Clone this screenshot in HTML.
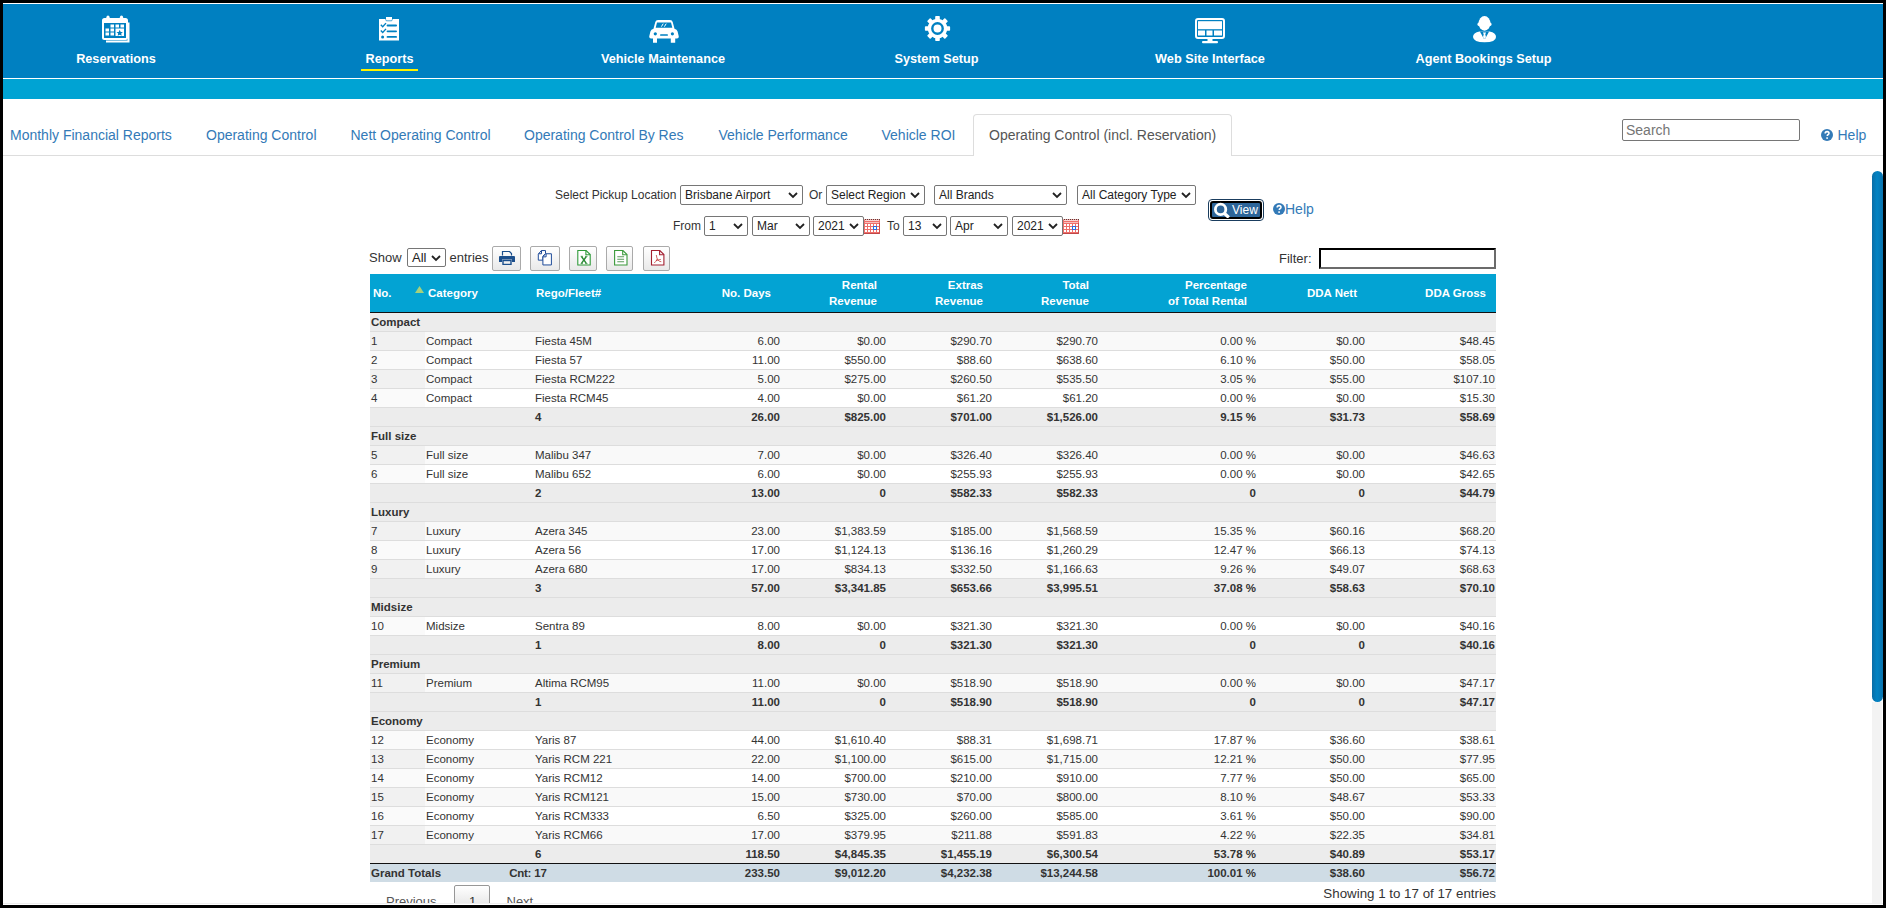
<!DOCTYPE html>
<html><head><meta charset="utf-8"><title>Operating Control (incl. Reservation)</title>
<style>
*{box-sizing:border-box}
html,body{margin:0;padding:0}
body{width:1886px;height:908px;position:relative;overflow:hidden;background:#fff;font-family:"Liberation Sans",sans-serif;color:#333}
.a{position:absolute}
.frame{position:absolute;background:#000;z-index:50}
/* nav */
.nav{position:absolute;left:3px;top:4px;width:1880px;height:74px;background:#0080c1}
.navline{position:absolute;left:3px;top:78px;width:1880px;height:1px;background:#fff}
.band{position:absolute;left:3px;top:79px;width:1880px;height:20px;background:#00a3d3}
.ni{position:absolute;top:52px;width:274px;text-align:center;color:#fff;font-weight:bold;font-size:12.7px;line-height:15px;white-space:nowrap}
.ico{position:absolute}
/* tabs */
.tabline{position:absolute;left:3px;top:155px;width:1880px;height:1px;background:#ddd}
.tab{position:absolute;top:125px;font-size:14px;line-height:20px;color:#337ab7;white-space:nowrap}
.tabact{position:absolute;left:973px;top:114px;width:259px;height:42px;border:1px solid #ddd;border-bottom:0;border-radius:4px 4px 0 0;background:#fff}
/* generic text */
.t{position:absolute;white-space:nowrap}
.sel{position:absolute;height:20px;border:1px solid #767676;border-radius:2px;background:#fff;font-size:12px;line-height:18px;padding-left:4px;color:#222;white-space:nowrap}
.sel svg{position:absolute;right:4px;top:6px}
.btn{position:absolute;top:246px;height:25px;border:1px solid #aaa;border-radius:2px;background:linear-gradient(#fff,#e9e9e9)}
.btn svg{position:absolute}
/* table */
.thead{position:absolute;left:370px;top:274px;width:1126px;height:39px;background:#03a3d3;border-bottom:1px solid #111}
.th{position:absolute;color:#fff;font-weight:bold;font-size:11.5px;line-height:16px;white-space:nowrap}
.row{position:absolute;left:370px;width:1126px;height:19px;border-bottom:1px solid #ddd}
.row i{position:absolute;left:0;top:0;width:55px;height:18px}
.odd{background:#f9f9f9}.odd i{background:#f1f1f1}
.even{background:#fff}.even i{background:#fafafa}
.grp{background:#ececec}
.tot{height:18px;border:0;background:#cfdce5}
.l,.r{position:absolute;font-size:11.5px;line-height:18px;white-space:nowrap;color:#333}
.b{font-weight:bold;color:#333}
</style></head>
<body>
<!-- NAV -->
<div class="nav"></div>
<div class="navline"></div>
<div class="band"></div>

<div class="ni" style="left:-21px">Reservations</div>
<div class="ni" style="left:252.5px">Reports</div>
<div class="ni" style="left:526px">Vehicle Maintenance</div>
<div class="ni" style="left:799.5px">System Setup</div>
<div class="ni" style="left:1073px">Web Site Interface</div>
<div class="ni" style="left:1346.5px">Agent Bookings Setup</div>
<div class="a" style="left:361px;top:69px;width:57px;height:2px;background:#fff200"></div>

<!-- icons -->
<svg class="ico" style="left:101px;top:15px" width="31" height="29" viewBox="0 0 31 29">
 <g fill="none" stroke="#fff" stroke-width="2">
  <rect x="2" y="4" width="24" height="20" rx="1.5"/>
  <path d="M5 26.5h22.5v-19"/>
 </g>
 <rect x="2" y="4" width="24" height="4" fill="#fff"/>
 <circle cx="7" cy="2.2" r="1.6" fill="#fff"/><circle cx="20.5" cy="2.2" r="1.6" fill="#fff"/>
 <g fill="#fff">
  <rect x="9.5" y="9.5" width="3.5" height="3"/><rect x="14.5" y="9.5" width="3.5" height="3"/><rect x="19.5" y="9.5" width="3.5" height="3"/>
  <rect x="4.5" y="13.5" width="3.5" height="3"/><rect x="9.5" y="13.5" width="3.5" height="3"/>
  <rect x="4.5" y="17.5" width="3.5" height="3"/><rect x="9.5" y="17.5" width="3.5" height="3"/>
  <rect x="14.5" y="13.5" width="8.5" height="7.5"/>
 </g>
 <path d="M18.7 14.8l1 2.1 2.2.2-1.7 1.5.5 2.2-2-1.1-2 1.1.5-2.2-1.7-1.5 2.2-.2z" fill="#0080c1"/>
</svg>

<svg class="ico" style="left:378px;top:16px" width="22" height="26" viewBox="0 0 22 26">
 <path d="M1 3h7v-2h6v2h7v21.5h-20z" fill="#fff"/>
 <path d="M7.5 3.2l.8 1.6h5.4l.8-1.6" fill="none" stroke="#0080c1" stroke-width="0.7"/>
 <g fill="none" stroke="#0080c1" stroke-width="1.4">
  <path d="M2.8 8.8l1.9 1.9 3.3-3.6"/><path d="M2.8 14.6l1.9 1.9 3.3-3.6"/>
 </g>
 <g fill="#0080c1"><rect x="8.6" y="8.6" width="10.4" height="1.8" rx=".9"/><rect x="8.6" y="14.4" width="10.4" height="1.8" rx=".9"/><rect x="8.6" y="20" width="10.4" height="1.8" rx=".9"/><circle cx="4.6" cy="20.9" r="1.5"/></g>
</svg>

<svg class="ico" style="left:649px;top:20px" width="30" height="23" viewBox="0 0 30 23">
 <path d="M6.3 2Q6.8 0 9 0H21Q23.2 0 23.7 2L25.5 8.8Q28 9.5 28.6 11.5L29.8 16.5Q29.8 18.5 28 18.5H26.2V22.8H21.8V18.5H8V22.8H4V18.5H2Q0.2 18.5 0.2 16.5L1.4 11.5Q2 9.5 4.5 8.8Z" fill="#fff"/>
 <path d="M8 2.6H22L23.3 7.8H6.7Z" fill="#0080c1"/>
 <g stroke="#fff" stroke-width="1" stroke-linecap="round"><path d="M12.6 6.3l1.4-2.3M15.6 6.3l1.4-2.3"/></g>
 <circle cx="6.3" cy="13.8" r="1.6" fill="#0080c1"/><circle cx="23.4" cy="13.8" r="1.6" fill="#0080c1"/>
 <rect x="11.1" y="14.2" width="7.8" height="1.5" rx=".5" fill="#0080c1"/>
</svg>

<svg class="ico" style="left:924px;top:15.4px" width="27" height="27" viewBox="0 0 27 27">
 <g fill="#fff" transform="translate(13.5 13.5)">
  <circle r="9.8"/>
  <rect x="-2.3" y="-12.6" width="4.6" height="5" rx=".8"/>
  <rect x="-2.3" y="-12.6" width="4.6" height="5" rx=".8" transform="rotate(45)"/>
  <rect x="-2.3" y="-12.6" width="4.6" height="5" rx=".8" transform="rotate(90)"/>
  <rect x="-2.3" y="-12.6" width="4.6" height="5" rx=".8" transform="rotate(135)"/>
  <rect x="-2.3" y="-12.6" width="4.6" height="5" rx=".8" transform="rotate(180)"/>
  <rect x="-2.3" y="-12.6" width="4.6" height="5" rx=".8" transform="rotate(225)"/>
  <rect x="-2.3" y="-12.6" width="4.6" height="5" rx=".8" transform="rotate(270)"/>
  <rect x="-2.3" y="-12.6" width="4.6" height="5" rx=".8" transform="rotate(315)"/>
 </g>
 <circle cx="13.5" cy="13.5" r="5.2" fill="none" stroke="#0080c1" stroke-width="2.4"/>
</svg>

<svg class="ico" style="left:1195px;top:18px" width="30" height="26" viewBox="0 0 30 26">
 <rect x="1" y="1" width="28" height="19" rx="2" fill="none" stroke="#fff" stroke-width="2"/>
 <g fill="#fff"><rect x="3" y="3.2" width="24" height="8"/><rect x="3" y="12.5" width="7" height="5"/><rect x="11.5" y="12.5" width="6" height="5"/><rect x="19" y="12.5" width="8" height="5"/>
 <rect x="12.5" y="20" width="5" height="3.5"/><rect x="7" y="23" width="16" height="2.2" rx="1"/></g>
</svg>

<svg class="ico" style="left:1473px;top:16px" width="24" height="27" viewBox="0 0 24 27">
 <g fill="#fff">
  <ellipse cx="11.5" cy="7.4" rx="5.9" ry="7.3"/>
  <ellipse cx="5.6" cy="8.2" rx="1.1" ry="1.8"/><ellipse cx="17.4" cy="8.2" rx="1.1" ry="1.8"/>
  <path d="M6.5 15.6Q0 17 0 21Q0.5 26.3 11.5 26.3Q23 26.3 23 21Q23 17 16.5 15.6z"/>
 </g>
 <path d="M6.9 15.5L16.1 15.5L12.3 22.6L10.7 22.6Z" fill="#0080c1"/>
 <path d="M9.9 16.4H13.1L12.3 18.3L13 21.3L11.5 22.8L10 21.3L10.7 18.3Z" fill="#fff"/>
</svg>

<!-- TABS -->
<div class="tabline"></div>
<div class="tabact"></div>
<div class="tab" style="left:10px">Monthly Financial Reports</div>
<div class="tab" style="left:206px">Operating Control</div>
<div class="tab" style="left:350.5px">Nett Operating Control</div>
<div class="tab" style="left:524px">Operating Control By Res</div>
<div class="tab" style="left:718.5px">Vehicle Performance</div>
<div class="tab" style="left:881.5px">Vehicle ROI</div>
<div class="tab" style="left:989px;color:#555">Operating Control (incl. Reservation)</div>

<div class="a" style="left:1622px;top:119px;width:178px;height:22px;border:1px solid #767676;border-radius:2px;background:#fff"></div>
<div class="t" style="left:1626px;top:122px;font-size:14px;line-height:16px;color:#757575">Search</div>
<svg class="ico" style="left:1821px;top:129px" width="12" height="12" viewBox="0 0 12 12"><circle cx="6" cy="6" r="6" fill="#337ab7"/><path d="M4.2 4.6q0-2 1.9-2q1.9 0 1.9 1.7q0 1-1.1 1.5q-.6.3-.6 1.1" fill="none" stroke="#fff" stroke-width="1.6"/><rect x="5.3" y="8.3" width="1.6" height="1.6" fill="#fff"/></svg>
<div class="t" style="left:1837.5px;top:127px;font-size:14px;line-height:16px;color:#337ab7">Help</div>

<!-- scrollbar -->
<div class="a" style="left:1872px;top:702px;width:10px;height:201px;background:#f3f3f3"></div>
<div class="a" style="left:1872px;top:171px;width:11px;height:531px;background:linear-gradient(90deg,#0a6da6,#0283c3 45%,#0a72ad);border-radius:5.5px"></div>

<!-- FILTERS -->
<div class="t" style="left:555px;top:188px;font-size:12px;line-height:14px;color:#333">Select Pickup Location</div>
<div class="sel" style="left:680px;top:185px;width:123px">Brisbane Airport<svg width="10" height="7" viewBox="0 0 10 7"><path d="M1 1l4 4 4-4" fill="none" stroke="#222" stroke-width="1.8"/></svg></div>
<div class="t" style="left:809px;top:188px;font-size:12px;line-height:14px;color:#333">Or</div>
<div class="sel" style="left:826px;top:185px;width:99px">Select Region<svg width="10" height="7" viewBox="0 0 10 7"><path d="M1 1l4 4 4-4" fill="none" stroke="#222" stroke-width="1.8"/></svg></div>
<div class="sel" style="left:934px;top:185px;width:133px">All Brands<svg width="10" height="7" viewBox="0 0 10 7"><path d="M1 1l4 4 4-4" fill="none" stroke="#222" stroke-width="1.8"/></svg></div>
<div class="sel" style="left:1077px;top:185px;width:119px">All Category Type<svg width="10" height="7" viewBox="0 0 10 7"><path d="M1 1l4 4 4-4" fill="none" stroke="#222" stroke-width="1.8"/></svg></div>

<div class="t" style="left:673px;top:219px;font-size:12px;line-height:14px;color:#333">From</div>
<div class="sel" style="left:704px;top:216px;width:44px">1<svg width="10" height="7" viewBox="0 0 10 7"><path d="M1 1l4 4 4-4" fill="none" stroke="#222" stroke-width="1.8"/></svg></div>
<div class="sel" style="left:752px;top:216px;width:58px">Mar<svg width="10" height="7" viewBox="0 0 10 7"><path d="M1 1l4 4 4-4" fill="none" stroke="#222" stroke-width="1.8"/></svg></div>
<div class="sel" style="left:813px;top:216px;width:51px">2021<svg width="10" height="7" viewBox="0 0 10 7"><path d="M1 1l4 4 4-4" fill="none" stroke="#222" stroke-width="1.8"/></svg></div>
<svg class="ico" style="left:864px;top:219px" width="16" height="15" viewBox="0 0 16 15"><rect x="0" y="1" width="16" height="14" fill="#ef6f6b"/><g fill="#f7a9a5"><rect x="0" y="0" width="1" height="1"/><rect x="2" y="0" width="1" height="1"/><rect x="4" y="0" width="1" height="1"/><rect x="6" y="0" width="1" height="1"/><rect x="8" y="0" width="1" height="1"/><rect x="10" y="0" width="1" height="1"/><rect x="12" y="0" width="1" height="1"/><rect x="14" y="0" width="1" height="1"/></g><g fill="#5a3a3a"><rect x="1" y="0" width="1" height="1"/><rect x="3" y="0" width="1" height="1"/><rect x="5" y="0" width="1" height="1"/><rect x="7" y="0" width="1" height="1"/><rect x="9" y="0" width="1" height="1"/><rect x="11" y="0" width="1" height="1"/><rect x="13" y="0" width="1" height="1"/><rect x="15" y="0" width="1" height="1"/></g><rect x="1" y="1" width="14" height="1" fill="#fff" opacity=".7"/><rect x="1" y="3" width="14" height="1" fill="#f9c0bc"/><g fill="#fff"><rect x="1" y="5" width="2" height="2"/><rect x="4" y="5" width="2" height="2"/><rect x="7" y="5" width="2" height="2"/><rect x="10" y="5" width="2" height="2"/><rect x="13" y="5" width="2" height="2"/><rect x="1" y="8" width="2" height="2"/><rect x="4" y="8" width="2" height="2"/><rect x="7" y="8" width="2" height="2"/><rect x="10" y="8" width="2" height="2"/><rect x="13" y="8" width="2" height="2"/><rect x="1" y="11" width="2" height="2"/><rect x="4" y="11" width="2" height="2"/><rect x="7" y="11" width="2" height="2"/><rect x="10" y="11" width="2" height="2"/><rect x="13" y="11" width="2" height="2"/></g><rect x="9.5" y="7.5" width="3" height="3" fill="none" stroke="#2a6de0" stroke-width="1"/><rect x="0" y="14" width="16" height="1" fill="#c04848"/><rect x="15" y="4" width="1" height="11" fill="#c85050"/></svg>
<div class="t" style="left:887px;top:219px;font-size:12px;line-height:14px;color:#333">To</div>
<div class="sel" style="left:903px;top:216px;width:44px">13<svg width="10" height="7" viewBox="0 0 10 7"><path d="M1 1l4 4 4-4" fill="none" stroke="#222" stroke-width="1.8"/></svg></div>
<div class="sel" style="left:950px;top:216px;width:58px">Apr<svg width="10" height="7" viewBox="0 0 10 7"><path d="M1 1l4 4 4-4" fill="none" stroke="#222" stroke-width="1.8"/></svg></div>
<div class="sel" style="left:1012px;top:216px;width:51px">2021<svg width="10" height="7" viewBox="0 0 10 7"><path d="M1 1l4 4 4-4" fill="none" stroke="#222" stroke-width="1.8"/></svg></div>
<svg class="ico" style="left:1063px;top:219px" width="16" height="15" viewBox="0 0 16 15"><rect x="0" y="1" width="16" height="14" fill="#ef6f6b"/><g fill="#f7a9a5"><rect x="0" y="0" width="1" height="1"/><rect x="2" y="0" width="1" height="1"/><rect x="4" y="0" width="1" height="1"/><rect x="6" y="0" width="1" height="1"/><rect x="8" y="0" width="1" height="1"/><rect x="10" y="0" width="1" height="1"/><rect x="12" y="0" width="1" height="1"/><rect x="14" y="0" width="1" height="1"/></g><g fill="#5a3a3a"><rect x="1" y="0" width="1" height="1"/><rect x="3" y="0" width="1" height="1"/><rect x="5" y="0" width="1" height="1"/><rect x="7" y="0" width="1" height="1"/><rect x="9" y="0" width="1" height="1"/><rect x="11" y="0" width="1" height="1"/><rect x="13" y="0" width="1" height="1"/><rect x="15" y="0" width="1" height="1"/></g><rect x="1" y="1" width="14" height="1" fill="#fff" opacity=".7"/><rect x="1" y="3" width="14" height="1" fill="#f9c0bc"/><g fill="#fff"><rect x="1" y="5" width="2" height="2"/><rect x="4" y="5" width="2" height="2"/><rect x="7" y="5" width="2" height="2"/><rect x="10" y="5" width="2" height="2"/><rect x="13" y="5" width="2" height="2"/><rect x="1" y="8" width="2" height="2"/><rect x="4" y="8" width="2" height="2"/><rect x="7" y="8" width="2" height="2"/><rect x="10" y="8" width="2" height="2"/><rect x="13" y="8" width="2" height="2"/><rect x="1" y="11" width="2" height="2"/><rect x="4" y="11" width="2" height="2"/><rect x="7" y="11" width="2" height="2"/><rect x="10" y="11" width="2" height="2"/><rect x="13" y="11" width="2" height="2"/></g><rect x="9.5" y="7.5" width="3" height="3" fill="none" stroke="#2a6de0" stroke-width="1"/><rect x="0" y="14" width="16" height="1" fill="#c04848"/><rect x="15" y="4" width="1" height="11" fill="#c85050"/></svg>

<!-- View button -->
<div class="a" style="left:1208px;top:199px;width:56px;height:22px;border:1px solid #1a3d5e;border-radius:4px;background:#fff"></div>
<div class="a" style="left:1210px;top:201px;width:52px;height:18px;border:2px solid #000;border-radius:3px;background:#2d6599"></div>
<svg class="ico" style="left:1213px;top:202px" width="18" height="16" viewBox="0 0 18 16"><circle cx="7.6" cy="7.4" r="5.2" fill="none" stroke="#fff" stroke-width="2.8"/><path d="M11 11l4.8 4.5" stroke="#fff" stroke-width="3.2"/></svg>
<div class="t" style="left:1232px;top:203px;font-size:12px;line-height:14px;color:#fff">View</div>
<svg class="ico" style="left:1273px;top:203px" width="12" height="12" viewBox="0 0 12 12"><circle cx="6" cy="6" r="6" fill="#337ab7"/><path d="M4.2 4.6q0-2 1.9-2q1.9 0 1.9 1.7q0 1-1.1 1.5q-.6.3-.6 1.1" fill="none" stroke="#fff" stroke-width="1.6"/><rect x="5.3" y="8.3" width="1.6" height="1.6" fill="#fff"/></svg>
<div class="t" style="left:1285px;top:201px;font-size:14px;line-height:16px;color:#337ab7">Help</div>

<!-- Show entries / buttons -->
<div class="t" style="left:369px;top:250px;font-size:13px;line-height:15px;color:#333">Show</div>
<div class="sel" style="left:407px;top:248px;width:39px;height:19px;font-size:13px;line-height:17px;padding-left:4px">All<svg width="10" height="7" viewBox="0 0 10 7" style="top:6px;right:4px"><path d="M1 1l4 4 4-4" fill="none" stroke="#222" stroke-width="1.8"/></svg></div>
<div class="t" style="left:449.5px;top:250px;font-size:13px;line-height:15px;color:#333">entries</div>

<div class="btn" style="left:492px;width:29px"><svg style="left:6px;top:4px" width="16" height="14" viewBox="0 0 16 14"><path d="M3.5 4.5v-4h7l2 2v2" fill="none" stroke="#1c4f8c" stroke-width="1.2"/><path d="M1 5h14q1 0 1 1v5h-3v-2.5h-10v2.5h-3v-5q0-1 1-1z" fill="#1c4f8c"/><rect x="4" y="9.5" width="8" height="4" fill="none" stroke="#1c4f8c" stroke-width="1.4"/></svg></div>
<div class="btn" style="left:530px;width:30px"><svg style="left:6px;top:2px" width="17" height="18" viewBox="0 0 17 17.5"><path d="M4.3 1.3h4.2v3l-2.6 2.6v4h-4.6v-6z" fill="#fff" stroke="#1f4b99" stroke-width="1"/><path d="M1.5 4.5h3v-3" fill="none" stroke="#1f4b99" stroke-width="1"/><path d="M8.8 4.5h5.6v11.2h-8.5v-8.3z" fill="#fff" stroke="#1f4b99" stroke-width="1"/><path d="M6.1 7.6h3v-3" fill="none" stroke="#1f4b99" stroke-width="1"/></svg></div>
<div class="btn" style="left:569px;width:28px"><svg style="left:6px;top:2px" width="16" height="18" viewBox="0 0 16 18"><path d="M1.8 1.5h8.3l4.1 4.1v10.4h-12.4z" fill="#fff" stroke="#2f9a3a" stroke-width="1.1"/><path d="M9.9 1.6v4.2h4.2" fill="none" stroke="#2f9a3a" stroke-width="1.1"/><path d="M5.5 7.5L10.3 14.4M10.3 7.5L5.5 14.4" stroke="#2a8a35" stroke-width="1.4"/><path d="M4.6 7.3h2.2M9.3 7.3h2.2M4.6 14.6h2.2M9.3 14.6h2.2" stroke="#2a8a35" stroke-width="0.8"/></svg></div>
<div class="btn" style="left:606px;width:27px"><svg style="left:6px;top:2px" width="16" height="18" viewBox="0 0 16 18"><path d="M1.6 1.5h8.3l4.1 4.1v10.4h-12.4z" fill="#fff" stroke="#3a9a3a" stroke-width="1.1"/><path d="M9.7 1.6v4.2h4.2" fill="none" stroke="#3a9a3a" stroke-width="1.1"/><g stroke="#5a9a5a" stroke-width="1.1"><path d="M4.3 7.8h6.8M4.3 10.3h6.8M4.3 12.8h6.8"/></g></svg></div>
<div class="btn" style="left:643px;width:27px"><svg style="left:6px;top:2px" width="16" height="18" viewBox="0 0 16 18"><path d="M1.5 1.5h8.3l4.1 4.1v10.4h-12.4z" fill="#fff" stroke="#a31f30" stroke-width="1.1"/><path d="M9.6 1.6v4.2h4.2" fill="none" stroke="#a31f30" stroke-width="1.1"/><path d="M6.3 6q.3 3.5 1.8 5.2t3.2 1.5M7.4 9.8q-1.5 3-3.2 4.2M6 11.6l4.8-1.2" fill="none" stroke="#c23b3b" stroke-width=".8"/></svg></div>

<div class="t" style="left:1279px;top:251px;font-size:13px;line-height:15px;color:#333">Filter:</div>
<div class="a" style="left:1319px;top:248px;width:177px;height:21px;border:2px inset #767676;border-top-color:#000;border-left-color:#000;border-right-color:#6b6b6b;border-bottom-color:#6b6b6b;background:#fff"></div>

<!-- TABLE HEADER -->
<div class="thead"></div>
<div class="th" style="left:373px;top:285px">No.</div>
<svg class="ico" style="left:415px;top:286px" width="9" height="7" viewBox="0 0 9 7"><path d="M4.5 0l4.5 7h-9z" fill="#a6d17c"/></svg>
<div class="th" style="left:428px;top:285px">Category</div>
<div class="th" style="left:536px;top:285px">Rego/Fleet#</div>
<div class="th" style="right:1115px;top:285px;text-align:right">No. Days</div>
<div class="th" style="right:1009px;top:277px;text-align:right">Rental<br>Revenue</div>
<div class="th" style="right:903px;top:277px;text-align:right">Extras<br>Revenue</div>
<div class="th" style="right:797px;top:277px;text-align:right">Total<br>Revenue</div>
<div class="th" style="right:639px;top:277px;text-align:right">Percentage<br>of Total Rental</div>
<div class="th" style="right:529px;top:285px;text-align:right">DDA Nett</div>
<div class="th" style="right:400px;top:285px;text-align:right">DDA Gross</div>

<!-- TABLE BODY -->
<div class="row grp" style="top:313px"></div>
<span class="l b" style="left:371px;top:313px">Compact</span>
<div class="row odd" style="top:332px"><i></i></div>
<span class="l " style="left:371px;top:332px">1</span>
<span class="l " style="left:426px;top:332px">Compact</span>
<span class="l " style="left:535px;top:332px">Fiesta 45M</span>
<span class="r " style="right:1106px;top:332px">6.00</span>
<span class="r " style="right:1000px;top:332px">$0.00</span>
<span class="r " style="right:894px;top:332px">$290.70</span>
<span class="r " style="right:788px;top:332px">$290.70</span>
<span class="r " style="right:630px;top:332px">0.00 %</span>
<span class="r " style="right:521px;top:332px">$0.00</span>
<span class="r " style="right:391px;top:332px">$48.45</span>
<div class="row even" style="top:351px"><i></i></div>
<span class="l " style="left:371px;top:351px">2</span>
<span class="l " style="left:426px;top:351px">Compact</span>
<span class="l " style="left:535px;top:351px">Fiesta 57</span>
<span class="r " style="right:1106px;top:351px">11.00</span>
<span class="r " style="right:1000px;top:351px">$550.00</span>
<span class="r " style="right:894px;top:351px">$88.60</span>
<span class="r " style="right:788px;top:351px">$638.60</span>
<span class="r " style="right:630px;top:351px">6.10 %</span>
<span class="r " style="right:521px;top:351px">$50.00</span>
<span class="r " style="right:391px;top:351px">$58.05</span>
<div class="row odd" style="top:370px"><i></i></div>
<span class="l " style="left:371px;top:370px">3</span>
<span class="l " style="left:426px;top:370px">Compact</span>
<span class="l " style="left:535px;top:370px">Fiesta RCM222</span>
<span class="r " style="right:1106px;top:370px">5.00</span>
<span class="r " style="right:1000px;top:370px">$275.00</span>
<span class="r " style="right:894px;top:370px">$260.50</span>
<span class="r " style="right:788px;top:370px">$535.50</span>
<span class="r " style="right:630px;top:370px">3.05 %</span>
<span class="r " style="right:521px;top:370px">$55.00</span>
<span class="r " style="right:391px;top:370px">$107.10</span>
<div class="row even" style="top:389px"><i></i></div>
<span class="l " style="left:371px;top:389px">4</span>
<span class="l " style="left:426px;top:389px">Compact</span>
<span class="l " style="left:535px;top:389px">Fiesta RCM45</span>
<span class="r " style="right:1106px;top:389px">4.00</span>
<span class="r " style="right:1000px;top:389px">$0.00</span>
<span class="r " style="right:894px;top:389px">$61.20</span>
<span class="r " style="right:788px;top:389px">$61.20</span>
<span class="r " style="right:630px;top:389px">0.00 %</span>
<span class="r " style="right:521px;top:389px">$0.00</span>
<span class="r " style="right:391px;top:389px">$15.30</span>
<div class="row grp" style="top:408px"></div>
<span class="l b" style="left:535px;top:408px">4</span>
<span class="r b" style="right:1106px;top:408px">26.00</span>
<span class="r b" style="right:1000px;top:408px">$825.00</span>
<span class="r b" style="right:894px;top:408px">$701.00</span>
<span class="r b" style="right:788px;top:408px">$1,526.00</span>
<span class="r b" style="right:630px;top:408px">9.15 %</span>
<span class="r b" style="right:521px;top:408px">$31.73</span>
<span class="r b" style="right:391px;top:408px">$58.69</span>
<div class="row grp" style="top:427px"></div>
<span class="l b" style="left:371px;top:427px">Full size</span>
<div class="row odd" style="top:446px"><i></i></div>
<span class="l " style="left:371px;top:446px">5</span>
<span class="l " style="left:426px;top:446px">Full size</span>
<span class="l " style="left:535px;top:446px">Malibu 347</span>
<span class="r " style="right:1106px;top:446px">7.00</span>
<span class="r " style="right:1000px;top:446px">$0.00</span>
<span class="r " style="right:894px;top:446px">$326.40</span>
<span class="r " style="right:788px;top:446px">$326.40</span>
<span class="r " style="right:630px;top:446px">0.00 %</span>
<span class="r " style="right:521px;top:446px">$0.00</span>
<span class="r " style="right:391px;top:446px">$46.63</span>
<div class="row even" style="top:465px"><i></i></div>
<span class="l " style="left:371px;top:465px">6</span>
<span class="l " style="left:426px;top:465px">Full size</span>
<span class="l " style="left:535px;top:465px">Malibu 652</span>
<span class="r " style="right:1106px;top:465px">6.00</span>
<span class="r " style="right:1000px;top:465px">$0.00</span>
<span class="r " style="right:894px;top:465px">$255.93</span>
<span class="r " style="right:788px;top:465px">$255.93</span>
<span class="r " style="right:630px;top:465px">0.00 %</span>
<span class="r " style="right:521px;top:465px">$0.00</span>
<span class="r " style="right:391px;top:465px">$42.65</span>
<div class="row grp" style="top:484px"></div>
<span class="l b" style="left:535px;top:484px">2</span>
<span class="r b" style="right:1106px;top:484px">13.00</span>
<span class="r b" style="right:1000px;top:484px">0</span>
<span class="r b" style="right:894px;top:484px">$582.33</span>
<span class="r b" style="right:788px;top:484px">$582.33</span>
<span class="r b" style="right:630px;top:484px">0</span>
<span class="r b" style="right:521px;top:484px">0</span>
<span class="r b" style="right:391px;top:484px">$44.79</span>
<div class="row grp" style="top:503px"></div>
<span class="l b" style="left:371px;top:503px">Luxury</span>
<div class="row odd" style="top:522px"><i></i></div>
<span class="l " style="left:371px;top:522px">7</span>
<span class="l " style="left:426px;top:522px">Luxury</span>
<span class="l " style="left:535px;top:522px">Azera 345</span>
<span class="r " style="right:1106px;top:522px">23.00</span>
<span class="r " style="right:1000px;top:522px">$1,383.59</span>
<span class="r " style="right:894px;top:522px">$185.00</span>
<span class="r " style="right:788px;top:522px">$1,568.59</span>
<span class="r " style="right:630px;top:522px">15.35 %</span>
<span class="r " style="right:521px;top:522px">$60.16</span>
<span class="r " style="right:391px;top:522px">$68.20</span>
<div class="row even" style="top:541px"><i></i></div>
<span class="l " style="left:371px;top:541px">8</span>
<span class="l " style="left:426px;top:541px">Luxury</span>
<span class="l " style="left:535px;top:541px">Azera 56</span>
<span class="r " style="right:1106px;top:541px">17.00</span>
<span class="r " style="right:1000px;top:541px">$1,124.13</span>
<span class="r " style="right:894px;top:541px">$136.16</span>
<span class="r " style="right:788px;top:541px">$1,260.29</span>
<span class="r " style="right:630px;top:541px">12.47 %</span>
<span class="r " style="right:521px;top:541px">$66.13</span>
<span class="r " style="right:391px;top:541px">$74.13</span>
<div class="row odd" style="top:560px"><i></i></div>
<span class="l " style="left:371px;top:560px">9</span>
<span class="l " style="left:426px;top:560px">Luxury</span>
<span class="l " style="left:535px;top:560px">Azera 680</span>
<span class="r " style="right:1106px;top:560px">17.00</span>
<span class="r " style="right:1000px;top:560px">$834.13</span>
<span class="r " style="right:894px;top:560px">$332.50</span>
<span class="r " style="right:788px;top:560px">$1,166.63</span>
<span class="r " style="right:630px;top:560px">9.26 %</span>
<span class="r " style="right:521px;top:560px">$49.07</span>
<span class="r " style="right:391px;top:560px">$68.63</span>
<div class="row grp" style="top:579px"></div>
<span class="l b" style="left:535px;top:579px">3</span>
<span class="r b" style="right:1106px;top:579px">57.00</span>
<span class="r b" style="right:1000px;top:579px">$3,341.85</span>
<span class="r b" style="right:894px;top:579px">$653.66</span>
<span class="r b" style="right:788px;top:579px">$3,995.51</span>
<span class="r b" style="right:630px;top:579px">37.08 %</span>
<span class="r b" style="right:521px;top:579px">$58.63</span>
<span class="r b" style="right:391px;top:579px">$70.10</span>
<div class="row grp" style="top:598px"></div>
<span class="l b" style="left:371px;top:598px">Midsize</span>
<div class="row even" style="top:617px"><i></i></div>
<span class="l " style="left:371px;top:617px">10</span>
<span class="l " style="left:426px;top:617px">Midsize</span>
<span class="l " style="left:535px;top:617px">Sentra 89</span>
<span class="r " style="right:1106px;top:617px">8.00</span>
<span class="r " style="right:1000px;top:617px">$0.00</span>
<span class="r " style="right:894px;top:617px">$321.30</span>
<span class="r " style="right:788px;top:617px">$321.30</span>
<span class="r " style="right:630px;top:617px">0.00 %</span>
<span class="r " style="right:521px;top:617px">$0.00</span>
<span class="r " style="right:391px;top:617px">$40.16</span>
<div class="row grp" style="top:636px"></div>
<span class="l b" style="left:535px;top:636px">1</span>
<span class="r b" style="right:1106px;top:636px">8.00</span>
<span class="r b" style="right:1000px;top:636px">0</span>
<span class="r b" style="right:894px;top:636px">$321.30</span>
<span class="r b" style="right:788px;top:636px">$321.30</span>
<span class="r b" style="right:630px;top:636px">0</span>
<span class="r b" style="right:521px;top:636px">0</span>
<span class="r b" style="right:391px;top:636px">$40.16</span>
<div class="row grp" style="top:655px"></div>
<span class="l b" style="left:371px;top:655px">Premium</span>
<div class="row odd" style="top:674px"><i></i></div>
<span class="l " style="left:371px;top:674px">11</span>
<span class="l " style="left:426px;top:674px">Premium</span>
<span class="l " style="left:535px;top:674px">Altima RCM95</span>
<span class="r " style="right:1106px;top:674px">11.00</span>
<span class="r " style="right:1000px;top:674px">$0.00</span>
<span class="r " style="right:894px;top:674px">$518.90</span>
<span class="r " style="right:788px;top:674px">$518.90</span>
<span class="r " style="right:630px;top:674px">0.00 %</span>
<span class="r " style="right:521px;top:674px">$0.00</span>
<span class="r " style="right:391px;top:674px">$47.17</span>
<div class="row grp" style="top:693px"></div>
<span class="l b" style="left:535px;top:693px">1</span>
<span class="r b" style="right:1106px;top:693px">11.00</span>
<span class="r b" style="right:1000px;top:693px">0</span>
<span class="r b" style="right:894px;top:693px">$518.90</span>
<span class="r b" style="right:788px;top:693px">$518.90</span>
<span class="r b" style="right:630px;top:693px">0</span>
<span class="r b" style="right:521px;top:693px">0</span>
<span class="r b" style="right:391px;top:693px">$47.17</span>
<div class="row grp" style="top:712px"></div>
<span class="l b" style="left:371px;top:712px">Economy</span>
<div class="row even" style="top:731px"><i></i></div>
<span class="l " style="left:371px;top:731px">12</span>
<span class="l " style="left:426px;top:731px">Economy</span>
<span class="l " style="left:535px;top:731px">Yaris 87</span>
<span class="r " style="right:1106px;top:731px">44.00</span>
<span class="r " style="right:1000px;top:731px">$1,610.40</span>
<span class="r " style="right:894px;top:731px">$88.31</span>
<span class="r " style="right:788px;top:731px">$1,698.71</span>
<span class="r " style="right:630px;top:731px">17.87 %</span>
<span class="r " style="right:521px;top:731px">$36.60</span>
<span class="r " style="right:391px;top:731px">$38.61</span>
<div class="row odd" style="top:750px"><i></i></div>
<span class="l " style="left:371px;top:750px">13</span>
<span class="l " style="left:426px;top:750px">Economy</span>
<span class="l " style="left:535px;top:750px">Yaris RCM 221</span>
<span class="r " style="right:1106px;top:750px">22.00</span>
<span class="r " style="right:1000px;top:750px">$1,100.00</span>
<span class="r " style="right:894px;top:750px">$615.00</span>
<span class="r " style="right:788px;top:750px">$1,715.00</span>
<span class="r " style="right:630px;top:750px">12.21 %</span>
<span class="r " style="right:521px;top:750px">$50.00</span>
<span class="r " style="right:391px;top:750px">$77.95</span>
<div class="row even" style="top:769px"><i></i></div>
<span class="l " style="left:371px;top:769px">14</span>
<span class="l " style="left:426px;top:769px">Economy</span>
<span class="l " style="left:535px;top:769px">Yaris RCM12</span>
<span class="r " style="right:1106px;top:769px">14.00</span>
<span class="r " style="right:1000px;top:769px">$700.00</span>
<span class="r " style="right:894px;top:769px">$210.00</span>
<span class="r " style="right:788px;top:769px">$910.00</span>
<span class="r " style="right:630px;top:769px">7.77 %</span>
<span class="r " style="right:521px;top:769px">$50.00</span>
<span class="r " style="right:391px;top:769px">$65.00</span>
<div class="row odd" style="top:788px"><i></i></div>
<span class="l " style="left:371px;top:788px">15</span>
<span class="l " style="left:426px;top:788px">Economy</span>
<span class="l " style="left:535px;top:788px">Yaris RCM121</span>
<span class="r " style="right:1106px;top:788px">15.00</span>
<span class="r " style="right:1000px;top:788px">$730.00</span>
<span class="r " style="right:894px;top:788px">$70.00</span>
<span class="r " style="right:788px;top:788px">$800.00</span>
<span class="r " style="right:630px;top:788px">8.10 %</span>
<span class="r " style="right:521px;top:788px">$48.67</span>
<span class="r " style="right:391px;top:788px">$53.33</span>
<div class="row even" style="top:807px"><i></i></div>
<span class="l " style="left:371px;top:807px">16</span>
<span class="l " style="left:426px;top:807px">Economy</span>
<span class="l " style="left:535px;top:807px">Yaris RCM333</span>
<span class="r " style="right:1106px;top:807px">6.50</span>
<span class="r " style="right:1000px;top:807px">$325.00</span>
<span class="r " style="right:894px;top:807px">$260.00</span>
<span class="r " style="right:788px;top:807px">$585.00</span>
<span class="r " style="right:630px;top:807px">3.61 %</span>
<span class="r " style="right:521px;top:807px">$50.00</span>
<span class="r " style="right:391px;top:807px">$90.00</span>
<div class="row odd" style="top:826px"><i></i></div>
<span class="l " style="left:371px;top:826px">17</span>
<span class="l " style="left:426px;top:826px">Economy</span>
<span class="l " style="left:535px;top:826px">Yaris RCM66</span>
<span class="r " style="right:1106px;top:826px">17.00</span>
<span class="r " style="right:1000px;top:826px">$379.95</span>
<span class="r " style="right:894px;top:826px">$211.88</span>
<span class="r " style="right:788px;top:826px">$591.83</span>
<span class="r " style="right:630px;top:826px">4.22 %</span>
<span class="r " style="right:521px;top:826px">$22.35</span>
<span class="r " style="right:391px;top:826px">$34.81</span>
<div class="row grp" style="top:845px"></div>
<span class="l b" style="left:535px;top:845px">6</span>
<span class="r b" style="right:1106px;top:845px">118.50</span>
<span class="r b" style="right:1000px;top:845px">$4,845.35</span>
<span class="r b" style="right:894px;top:845px">$1,455.19</span>
<span class="r b" style="right:788px;top:845px">$6,300.54</span>
<span class="r b" style="right:630px;top:845px">53.78 %</span>
<span class="r b" style="right:521px;top:845px">$40.89</span>
<span class="r b" style="right:391px;top:845px">$53.17</span>
<div style="position:absolute;left:370px;top:863px;width:1126px;height:1px;background:#111"></div>
<div class="row tot" style="top:864px"></div>
<span class="l b" style="left:371px;top:864px">Grand Totals</span>
<span class="r b" style="right:1339px;top:864px"><span style="letter-spacing:-0.3px">Cnt:</span> 17</span>
<span class="r b" style="right:1106px;top:864px">233.50</span>
<span class="r b" style="right:1000px;top:864px">$9,012.20</span>
<span class="r b" style="right:894px;top:864px">$4,232.38</span>
<span class="r b" style="right:788px;top:864px">$13,244.58</span>
<span class="r b" style="right:630px;top:864px">100.01 %</span>
<span class="r b" style="right:521px;top:864px">$38.60</span>
<span class="r b" style="right:391px;top:864px">$56.72</span>

<!-- bottom info -->
<div class="t" style="right:390px;top:886px;font-size:13.33px;line-height:15px;color:#333">Showing 1 to 17 of 17 entries</div>
<div class="a" style="left:454px;top:885px;width:36px;height:30px;border:1px solid #979797;border-radius:2px;background:linear-gradient(#fff,#dcdcdc)"></div>
<div class="t" style="left:386px;top:894px;font-size:13px;line-height:15px;color:#555">Previous</div>
<div class="t" style="left:469px;top:894px;font-size:13px;line-height:15px;color:#333">1</div>
<div class="t" style="left:506.5px;top:894px;font-size:13px;line-height:15px;color:#555">Next</div>
<div class="a" style="left:3px;top:903px;width:1880px;height:1px;background:#eee;z-index:40"></div>
<div class="a" style="left:3px;top:904px;width:1880px;height:1px;background:#fff;z-index:40"></div>

<!-- frame -->
<div class="frame" style="left:0;top:0;width:1886px;height:3px"></div>
<div class="frame" style="left:0;top:905px;width:1886px;height:3px"></div>
<div class="frame" style="left:0;top:0;width:3px;height:908px"></div>
<div class="frame" style="left:1883px;top:0;width:3px;height:908px"></div>
</body></html>
